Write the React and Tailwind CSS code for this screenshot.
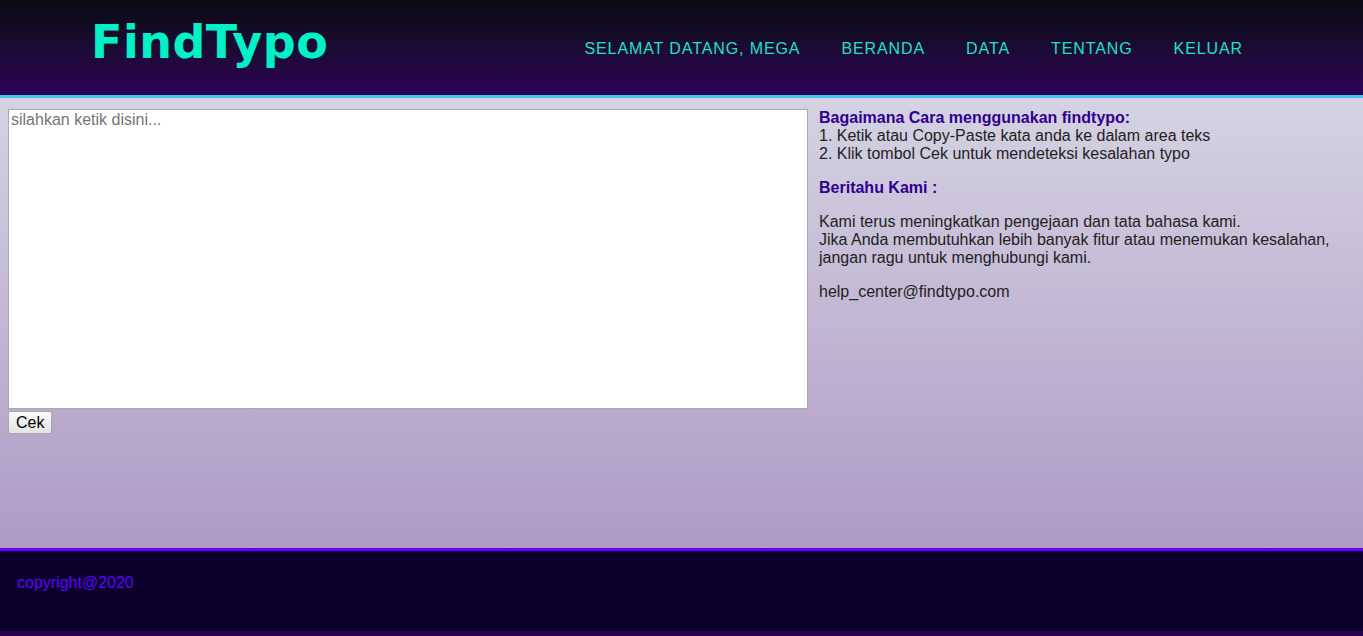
export default function App() {
  const nav = ["SELAMAT DATANG, MEGA", "BERANDA", "DATA", "TENTANG", "KELUAR"];

  return (
    <div className="min-h-[636px] bg-[#2c0055] font-['Liberation_Sans',Arial,sans-serif]">
      {/* header */}
      <header className="h-[98px] border-b-[3px] border-[#3fc6ea] bg-gradient-to-b from-[#0a0a12] to-[#2d0057] flex items-center">
        <h1 className="pl-[91px] text-[46px] leading-none font-bold tracking-[0.5px] text-[#00f0c8] font-['DejaVu_Sans',Verdana,sans-serif] -mt-[12px]">
          FindTypo
        </h1>
        <nav className="ml-auto mr-[120px] mt-[2px] flex gap-[41px] text-[16px] tracking-[0.9px] text-[#1fe0c8]">
          {nav.map((item) => (
            <a key={item} href="#" className="leading-[18px]">
              {item}
            </a>
          ))}
        </nav>
      </header>

      {/* main */}
      <main className="h-[450px] bg-gradient-to-b from-[#d5d3e3] to-[#ae9ac3] flex pt-[11px] pl-[8px]">
        <div className="w-[800px] shrink-0">
          <textarea
            placeholder="silahkan ketik disini..."
            className="block w-[800px] h-[300px] bg-white border border-[#a9a9a9] px-[2px] py-[1px] text-[16px] leading-[18px] text-black placeholder:text-[#757575] resize-none outline-none"
          />
          <button className="mt-[2px] h-[23px] px-[7px] text-[16px] leading-[18px] text-black bg-gradient-to-b from-[#fbfbfb] to-[#e3e3e3] border border-[#a8a8a8] rounded-[2px]">
            Cek
          </button>
        </div>
        <div className="ml-[11px] text-[16px] leading-[18px] text-[#222]">
          <p>
            <b className="text-[#300090]">Bagaimana Cara menggunakan findtypo:</b>
            <br />
            1. Ketik atau Copy-Paste kata anda ke dalam area teks
            <br />
            2. Klik tombol Cek untuk mendeteksi kesalahan typo
          </p>
          <p className="mt-[16px]">
            <b className="text-[#300090]">Beritahu Kami :</b>
          </p>
          <p className="mt-[16px]">
            Kami terus meningkatkan pengejaan dan tata bahasa kami.
            <br />
            Jika Anda membutuhkan lebih banyak fitur atau menemukan kesalahan,
            <br />
            jangan ragu untuk menghubungi kami.
          </p>
          <p className="mt-[16px]">help_center@findtypo.com</p>
        </div>
      </main>

      {/* footer */}
      <footer className="h-[83px] border-t-[3px] border-[#6000ff] bg-[#0a002b] pl-[17px] pt-[23px]">
        <p className="text-[16px] leading-[18px] text-[#6000ff]">copyright@2020</p>
      </footer>
    </div>
  );
}
